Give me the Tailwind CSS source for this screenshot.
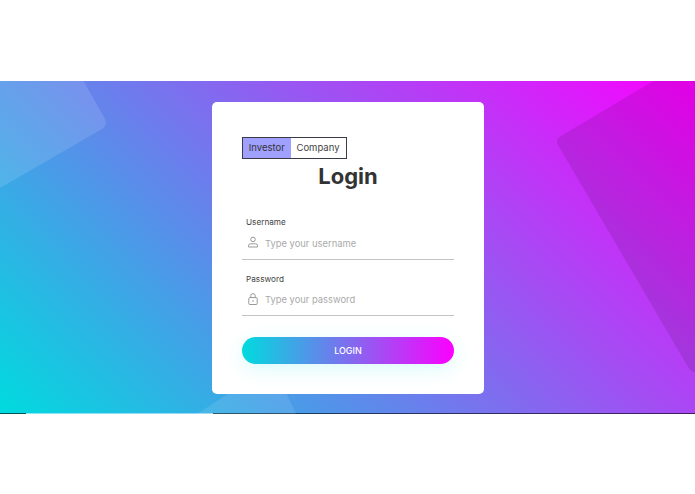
<!DOCTYPE html>
<html lang="en">
<head>
    <meta charset="UTF-8">
    <meta name="viewport" content="width=device-width, initial-scale=1.0">
    <title>Login</title>
    <script src="https://cdn.jsdelivr.net/npm/@tailwindcss/browser@4"></script>
</head>
<body class="bg-white font-['Inter','Liberation_Sans',sans-serif] overflow-hidden">
<div class="h-[81px]"></div>

<!-- Banner -->
<div class="relative h-[333px] flex flex-col bg-[linear-gradient(45deg,#00dbde,#fc00ff)] overflow-hidden">
    <!-- background shapes -->
    <svg class="absolute inset-0" width="695" height="333" viewBox="0 0 695 333">
        <path d="M0 -10 L78 -10 L105 38 Q108 44 102 48 L0 107 Z" fill="#fff" fill-opacity="0.12"/>
        <path d="M655 -1 L700 -1 L700 291 L695 291 Q691 291 688 286 L558 64 Q555 58 561 55 Z" fill="#000" fill-opacity="0.1"/>
        <path d="M197 333 L240 305 L283 305 L296 333 Z" fill="#fff" fill-opacity="0.1"/>
    </svg>

    <!-- Card -->
    <div class="relative ml-[212px] mt-[21px] w-[272px] h-[292px] rounded-[5px] bg-white px-[30px] pt-[35px] text-[#333]">
        <div class="flex w-fit h-[22px] border-[1.5px] border-[#3a3a4a] text-[9.5px] leading-[19px]">
            <div class="w-[47.5px] bg-[#a0a0ff] text-center text-[#333]">Investor</div>
            <div class="w-[55px] text-center text-[#444]">Company</div>
        </div>
        <h1 class="mt-[1px] text-center text-[22px] leading-[32px] font-bold text-[#333]">Login</h1>

        <div class="mt-[24px]">
            <label class="block pl-[4px] text-[8.2px] leading-[12px] text-[#444]">Username</label>
            <div class="flex items-center mt-[1.5px] pl-[5px] border-b border-[#c4c4c4] pb-[2px] h-[30px]">
                <svg class="w-[12px] h-[12px] -mt-[1.5px] text-[#999]" viewBox="0 0 12 12" fill="none" stroke="currentColor" stroke-width="1">
                    <circle cx="6" cy="3.4" r="2.3"/>
                    <path d="M1.5 11 V9.6 Q1.5 7.8 3.5 7.8 H8.5 Q10.5 7.8 10.5 9.6 V11 Z"/>
                </svg>
                <span class="ml-[6px] mt-[2px] text-[9.4px] text-[#aaa]">Type your username</span>
            </div>
        </div>

        <div class="mt-[13px]">
            <label class="block pl-[4px] text-[8.2px] leading-[12px] text-[#444]">Password</label>
            <div class="flex items-center mt-[1.5px] pl-[5px] border-b border-[#c4c4c4] pb-[2px] h-[30px]">
                <svg class="w-[12px] h-[12px] -mt-[1.5px] text-[#999]" viewBox="0 0 12 12" fill="none" stroke="currentColor" stroke-width="1">
                    <rect x="1.8" y="4.6" width="8.4" height="6.9" rx="1"/>
                    <path d="M3.8 4.6 V2.8 Q3.8 0.6 6 0.6 Q8.2 0.6 8.2 2.8 V4.6"/>
                    <circle cx="6" cy="8" r="0.8" fill="currentColor" stroke="none"/>
                </svg>
                <span class="ml-[6px] mt-[2px] text-[9.4px] text-[#aaa]">Type your password</span>
            </div>
        </div>

        <button class="block w-[212px] h-[27px] mt-[21px] rounded-full bg-[linear-gradient(90deg,#00dbde,#fc00ff)] text-white text-[9px] font-medium shadow-[0_5px_20px_rgba(0,219,222,0.15)]">LOGIN</button>
    </div>

    <!-- bottom rule -->
    <div class="flex h-px mt-auto">
        <div class="w-[26px] bg-black/60"></div>
        <div class="w-[187px] bg-white/50"></div>
        <div class="flex-1 bg-black/60"></div>
    </div>
</div>
</body>
</html>
